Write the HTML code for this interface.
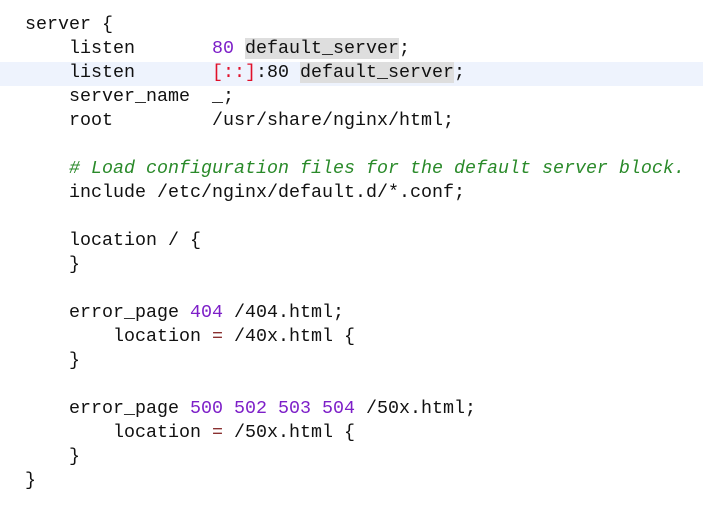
<!DOCTYPE html>
<html><head><style>
html,body{margin:0;padding:0;background:#fff;width:703px;height:507px;overflow:hidden}
.l{position:absolute;left:25px;height:24px;line-height:24px;font-family:"Liberation Mono",monospace;font-size:18.33px;color:#111;white-space:pre}
.n{color:#7d1fc8}.r{color:#e0102a}.c{color:#2a8a2a;font-style:italic}.e{color:#8a3030}
.s{background:#dedede}
</style></head><body>
<div style="position:absolute;left:0;top:62px;width:703px;height:24px;background:#eef3fd"></div>
<div class="l" style="top:13px">server {</div>
<div class="l" style="top:37px">    listen       <span class="n">80</span> <span class="s">default_server</span>;</div>
<div class="l" style="top:61px">    listen       <span class="r">[::]</span>:80 <span class="s">default_server</span>;</div>
<div class="l" style="top:85px">    server_name  _;</div>
<div class="l" style="top:109px">    root         /usr/share/nginx/html;</div>
<div class="l" style="top:157px">    <span class="c"># Load configuration files for the default server block.</span></div>
<div class="l" style="top:181px">    include /etc/nginx/default.d/*.conf;</div>
<div class="l" style="top:229px">    location / {</div>
<div class="l" style="top:253px">    }</div>
<div class="l" style="top:301px">    error_page <span class="n">404</span> /404.html;</div>
<div class="l" style="top:325px">        location <span class="e">=</span> /40x.html {</div>
<div class="l" style="top:349px">    }</div>
<div class="l" style="top:397px">    error_page <span class="n">500 502 503 504</span> /50x.html;</div>
<div class="l" style="top:421px">        location <span class="e">=</span> /50x.html {</div>
<div class="l" style="top:445px">    }</div>
<div class="l" style="top:469px">}</div>
</body></html>
